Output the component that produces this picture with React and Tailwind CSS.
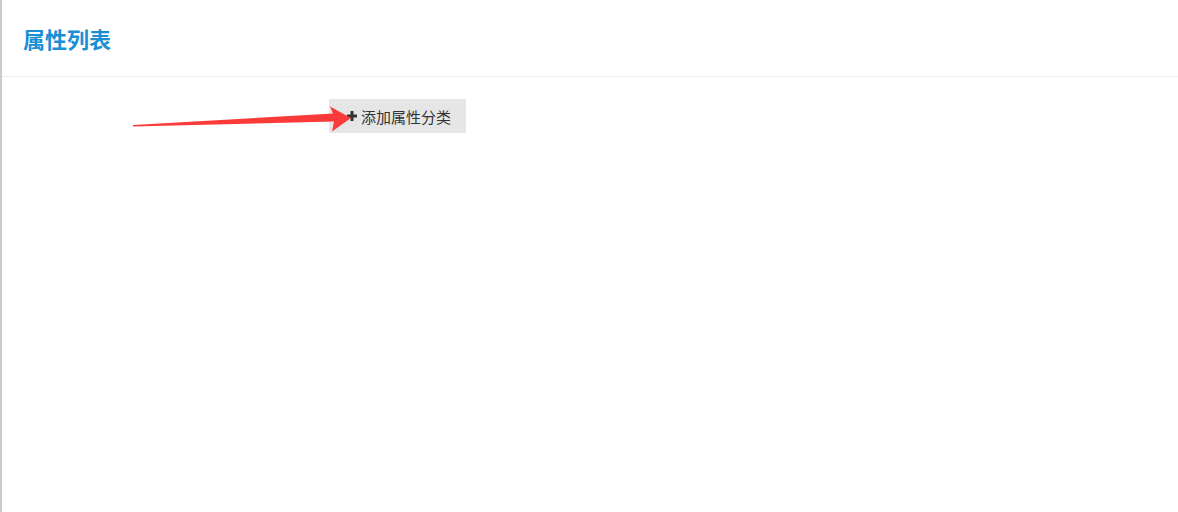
export default function App() {
  return (
    <div className="relative h-[512px] w-[1178px] overflow-hidden bg-white border-l-2 border-[#cccccc]" style={{ fontFamily: '"Noto Sans CJK SC", "Noto Sans", sans-serif' }}>
      <div className="flex h-[77px] items-center border-b border-[#eeeeee] pl-[21px] pb-[1px]">
        <h1 className="text-[22px] font-bold leading-none text-[#1a8fd6]">属性列表</h1>
      </div>
      <div className="pl-[327px] pt-[22px]">
        <button className="flex h-[34px] w-[137px] items-center gap-[4px] bg-[#e6e6e6] pl-[18px] text-[15px] text-[#333333]">
          <svg width="10" height="10" viewBox="0 0 10 10" className="shrink-0">
            <path d="M3.5 0h3v3.5H10v3H6.5V10h-3V6.5H0v-3h3.5z" fill="#333333" />
          </svg>
          <span className="leading-none">添加属性分类</span>
        </button>
      </div>
      <svg className="absolute left-0 top-0 pointer-events-none" width="1178" height="512">
        <polygon points="131,125 331,113.5 328,106.5 349,118 330,131.5 332,121.5 131,126.5" fill="#fb3a3a" />
      </svg>
    </div>
  );
}
